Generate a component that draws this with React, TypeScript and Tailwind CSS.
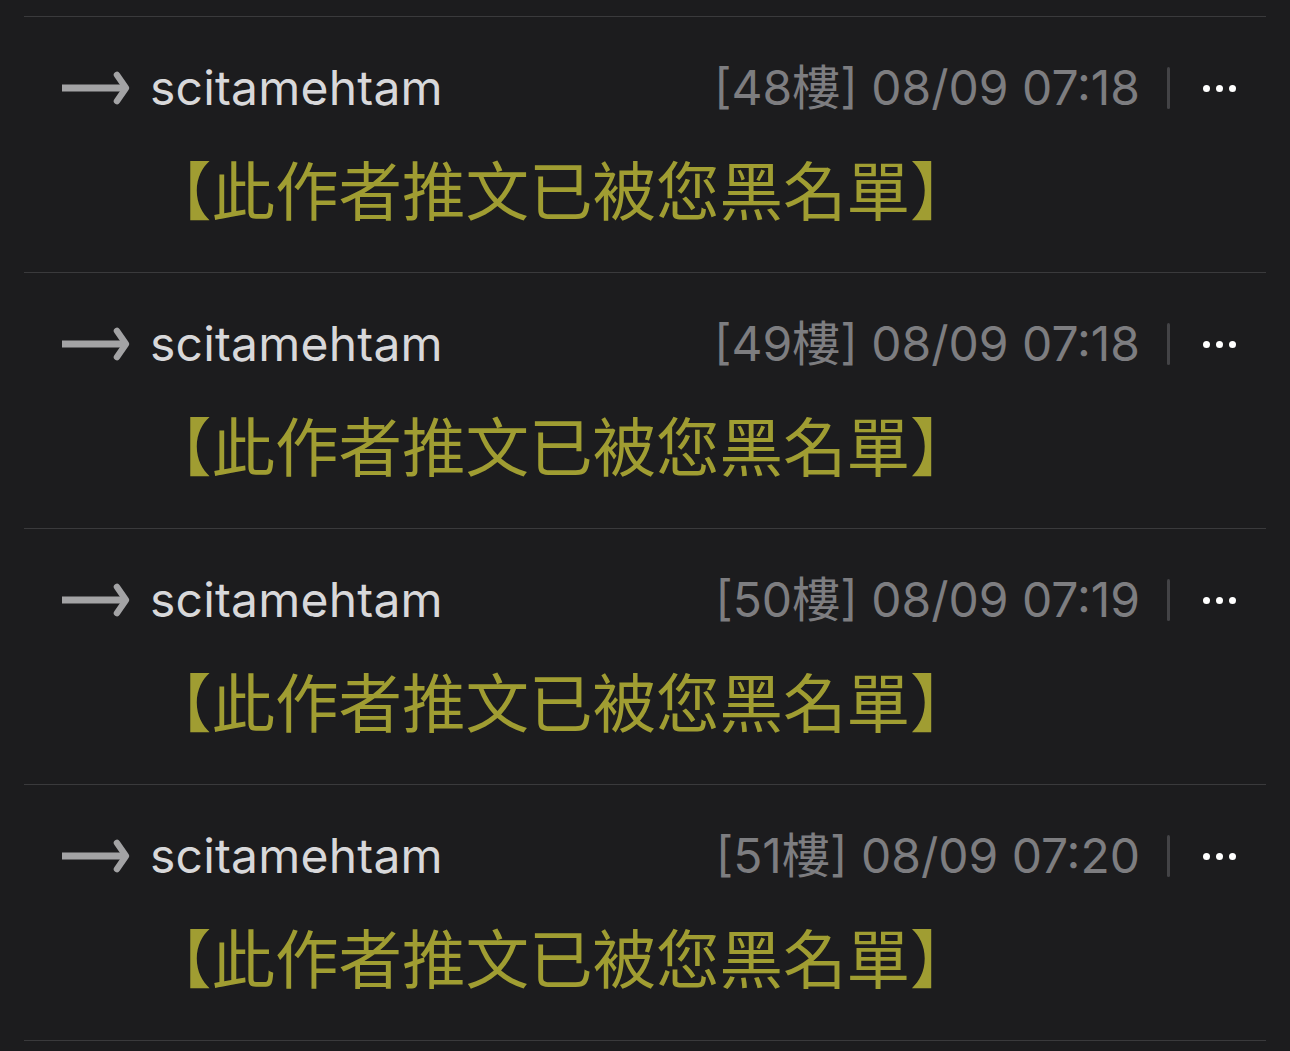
import React from 'react';

const rows = [
  { floor: '48', time: '08/09 07:18' },
  { floor: '49', time: '08/09 07:18' },
  { floor: '50', time: '08/09 07:19' },
  { floor: '51', time: '08/09 07:20' },
];

const Arrow = () => (
  <svg width="68" height="36" viewBox="0 0 68 36" className="shrink-0">
    <path d="M0 18 H63" stroke="#a3a3a5" strokeWidth="7" fill="none" />
    <path d="M55 5 L64 18 L55 31" stroke="#a3a3a5" strokeWidth="6.5" fill="none" strokeLinecap="round" strokeLinejoin="round" />
  </svg>
);

const PushRow = ({ floor, time }: { floor: string; time: string }) => (
  <div className="border-t border-[#3a3a3c] h-[256px] pt-[41px]">
    <div className="h-[60px] flex items-center pl-[38px] pr-[30px]">
      <Arrow />
      <span className="ml-[20px] text-[48px] text-[#d8d8da] tracking-[0.2px]">scitamehtam</span>
      <span className="ml-auto text-[48px] text-[#7d7d80]">[{floor}樓] {time}</span>
      <div className="ml-[27px] w-[3px] h-[42px] bg-[#434346] rounded-full" />
      <div className="ml-[33px] flex items-center gap-[6px]">
        <span className="w-[7px] h-[7px] rounded-full bg-white" />
        <span className="w-[7px] h-[7px] rounded-full bg-white" />
        <span className="w-[7px] h-[7px] rounded-full bg-white" />
      </div>
    </div>
    <div className="mt-[30px] h-[80px] flex items-center pl-[124px] text-[63.5px] text-[#a09d32] font-['Noto_Sans_CJK_TC',sans-serif]">
      【此作者推文已被您黑名單】
    </div>
  </div>
);

export default function App() {
  return (
    <div className="min-h-[1051px] bg-[#1c1c1e] pt-4 font-['Inter','Noto_Sans_CJK_TC',sans-serif]">
      <div className="mx-6 border-b border-[#3a3a3c]">
        {rows.map((r) => (
          <PushRow key={r.floor} floor={r.floor} time={r.time} />
        ))}
      </div>
    </div>
  );
}
